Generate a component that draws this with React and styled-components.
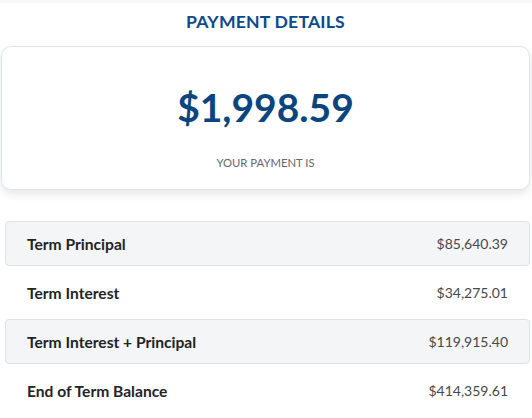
import styled, { createGlobalStyle } from "styled-components";

const GlobalStyle = createGlobalStyle`
    * { box-sizing: border-box; }
    body {
        margin: 0;
        background: #ffffff;
        font-family: Lato, "Liberation Sans", sans-serif;
    }
`;

const rows = [
    { label: "Term Principal", value: "$85,640.39", shaded: true },
    { label: "Term Interest", value: "$34,275.01", shaded: false },
    { label: "Term Interest + Principal", value: "$119,915.40", shaded: true },
    { label: "End of Term Balance", value: "$414,359.61", shaded: false },
];

function App() {
    return (
        <>
            <GlobalStyle />
            <Page>
                <Title>PAYMENT DETAILS</Title>
                <Card>
                    <Amount>$1,998.59</Amount>
                    <Caption>YOUR PAYMENT IS</Caption>
                </Card>
                <List>
                    {rows.map((r) => (
                        <Row key={r.label} $shaded={r.shaded}>
                            <Label>{r.label}</Label>
                            <Value>{r.value}</Value>
                        </Row>
                    ))}
                </List>
            </Page>
        </>
    );
}

const Page = styled.div`
    width: 532px;
    height: 418px;
    padding: 0 2px 0 1px;
    border-top: 3px solid #f7f8f9;
    overflow: hidden;
`;

const Title = styled.h2`
    margin: 0;
    padding-top: 8px;
    height: 43px;
    text-align: center;
    font-size: 17.6px;
    font-weight: 700;
    letter-spacing: 0.2px;
    color: #0b4a8c;
`;

const Card = styled.div`
    display: flex;
    flex-direction: column;
    align-items: center;
    height: 144px;
    padding-top: 36px;
    border: 1px solid #dfe6e9;
    border-radius: 10px;
    background: #ffffff;
    box-shadow: 0 4px 8px rgba(40, 60, 70, 0.12);
`;

const Amount = styled.div`
    font-size: 39px;
    font-weight: 700;
    line-height: 48px;
    color: #0b4580;
`;

const Caption = styled.div`
    margin-top: 25px;
    font-size: 11.3px;
    color: #63686b;
`;

const List = styled.div`
    display: flex;
    flex-direction: column;
    gap: 4px;
    margin-top: 31px;
    padding: 0 0 0 4px;
`;

const Row = styled.div`
    display: flex;
    align-items: center;
    justify-content: space-between;
    height: 45px;
    padding: 0 21px;
    border: 1px solid ${(p) => (p.$shaded ? "#dce3e6" : "transparent")};
    border-radius: 4px;
    background: ${(p) => (p.$shaded ? "#f4f5f7" : "transparent")};
`;

const Label = styled.span`
    font-size: 15.6px;
    font-weight: 700;
    color: #222426;
`;

const Value = styled.span`
    font-size: 14px;
    color: #45494c;
`;

export default App;
